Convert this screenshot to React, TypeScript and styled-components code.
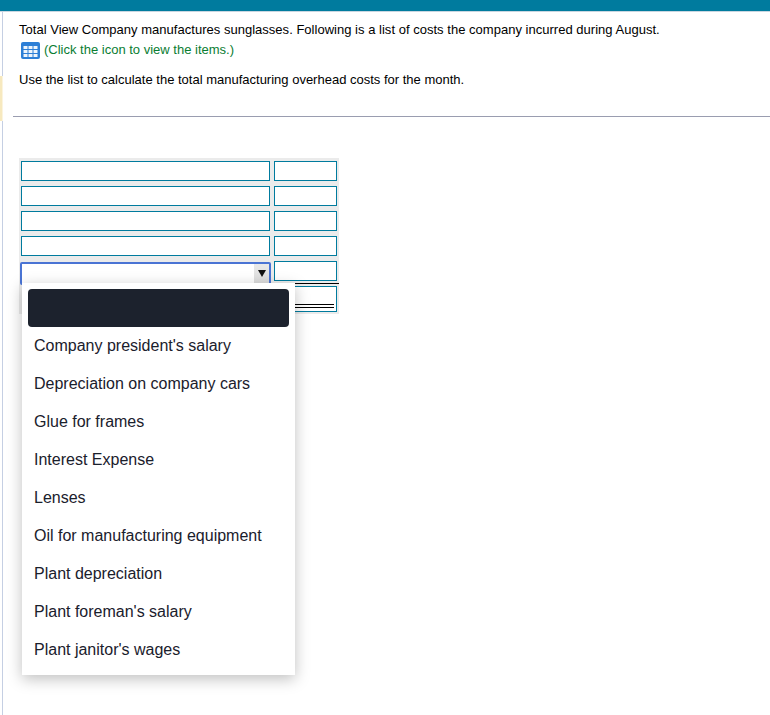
import React from "react";
import styled, { createGlobalStyle } from "styled-components";

const Global = createGlobalStyle`
  html, body { margin: 0; padding: 0; background: #fff; }
  body { font-family: "Liberation Sans", Arial, sans-serif; color: #000; }
`;
const Page = styled.div`
  position: relative;
  width: 770px;
  height: 715px;
  overflow: hidden;
  background: #fff;
`;
const TopBar = styled.div`
  height: 11px;
  background: #007b9e;
  border-bottom: 1px solid #c9d6e0;
`;
const Body = styled.div`
  display: flex;
  height: 703px;
`;
const Rail = styled.div`
  position: relative;
  width: 3px;
  flex: none;
  background: linear-gradient(to right, transparent 2px, #c5cfe3 2px);
  &::after {
    content: "";
    position: absolute;
    left: 0;
    top: 64px;
    width: 3px;
    height: 45px;
    background: linear-gradient(to right, #f7e9bf 2px, #fbf4df 2px);
  }
`;
const Content = styled.div`
  flex: 1;
  min-width: 0;
  padding-left: 10px;
`;
const Question = styled.div`
  padding: 9px 0 0 6px;
  height: 95px;
  box-sizing: border-box;
  font-size: 13px;
  line-height: 18px;
`;
const Line = styled.div`
  height: 18px;
  white-space: nowrap;
`;
const LeadLine = styled(Line)`
  letter-spacing: 0.02px;
`;
const HintLine = styled(Line)`
  display: flex;
  align-items: center;
  gap: 4px;
  margin-top: 2px;
  color: #0a7d32;
`;
const Instruction = styled(Line)`
  margin-top: 12px;
`;
const Rule = styled.hr`
  margin: 9px 0 0 0;
  border: 0;
  height: 1px;
  background: #9a9db0;
`;
const Grid = styled.div`
  width: 320px;
  height: 156px;
  margin: 41px 0 0 6px;
  box-sizing: border-box;
  padding: 3px 2px;
  background: #ebebeb;
  display: grid;
  grid-template-columns: 249px 63px;
  grid-template-rows: repeat(5, 20px) 26px;
  column-gap: 4px;
  row-gap: 5px;
`;
const Field = styled.div`
  box-sizing: border-box;
  background: #fff;
  border: 1px solid #007b9e;
`;
const OpenSelect = styled.div`
  box-sizing: border-box;
  align-self: start;
  margin: 1px 0 0 -1px;
  width: 251px;
  height: 23px;
  background: #fff;
  border: 2px solid #4a74d4;
  border-radius: 2px;
  display: flex;
  justify-content: flex-end;
`;
const Arrow = styled.div`
  width: 15px;
  background: linear-gradient(#e9e9e9, #dcdcdc);
  display: flex;
  align-items: center;
  justify-content: center;
  &::after {
    content: "";
    width: 0;
    height: 0;
    border-left: 4px solid transparent;
    border-right: 4px solid transparent;
    border-top: 7px solid #111;
  }
`;
const TotalCell = styled(Field)`
  position: relative;
  &::before {
    content: "";
    position: absolute;
    left: -4px;
    right: -3px;
    top: -4px;
    height: 1px;
    background: #000;
  }
  &::after {
    content: "";
    position: absolute;
    left: 0;
    right: 2px;
    bottom: 3px;
    height: 2px;
    border-top: 1px solid #000;
    border-bottom: 1px solid #000;
  }
`;
const Menu = styled.div`
  position: absolute;
  left: 22px;
  top: 283px;
  width: 273px;
  height: 392px;
  box-sizing: border-box;
  padding: 6px;
  background: #fff;
  box-shadow: 0 4px 14px rgba(0, 0, 0, 0.25);
  font-size: 16px;
  color: #1a202c;
`;
const MenuItem = styled.div<{ $selected?: boolean }>`
  height: 38px;
  line-height: 37px;
  padding: 0 6px;
  border-radius: 4px;
  white-space: nowrap;
  background: ${(p) => (p.$selected ? "#1c222d" : "transparent")};
`;
const IconSvg = styled.svg`
  display: block;
  margin-left: 2px;
`;

const TableIcon = () => (
  <IconSvg width="19" height="17" viewBox="0 0 19 17">
    <rect width="19" height="17" rx="2" fill="#2d7fd6" />
    <g fill="#eef5fc">
      {[4, 8, 12].map((y) =>
        [2.5, 7.5, 12.5].map((x) => <rect key={`${x}-${y}`} x={x} y={y} width="4" height="3" />)
      )}
    </g>
  </IconSvg>
);

const items = [
  "Company president's salary",
  "Depreciation on company cars",
  "Glue for frames",
  "Interest Expense",
  "Lenses",
  "Oil for manufacturing equipment",
  "Plant depreciation",
  "Plant foreman's salary",
  "Plant janitor's wages",
];

export default function App() {
  return (
    <Page>
      <Global />
      <TopBar />
      <Body>
        <Rail />
        <Content>
          <Question>
            <LeadLine>Total View Company manufactures sunglasses. Following is a list of costs the company incurred during August.</LeadLine>
            <HintLine>
              <TableIcon />
              <span>(Click the icon to view the items.)</span>
            </HintLine>
            <Instruction>Use the list to calculate the total manufacturing overhead costs for the month.</Instruction>
          </Question>
          <Rule />
          <Grid>
            <Field /><Field />
            <Field /><Field />
            <Field /><Field />
            <Field /><Field />
            <OpenSelect><Arrow /></OpenSelect><Field />
            <span /><TotalCell />
          </Grid>
        </Content>
      </Body>
      <Menu>
        <MenuItem $selected />
        {items.map((t) => (
          <MenuItem key={t}>{t}</MenuItem>
        ))}
      </Menu>
    </Page>
  );
}
